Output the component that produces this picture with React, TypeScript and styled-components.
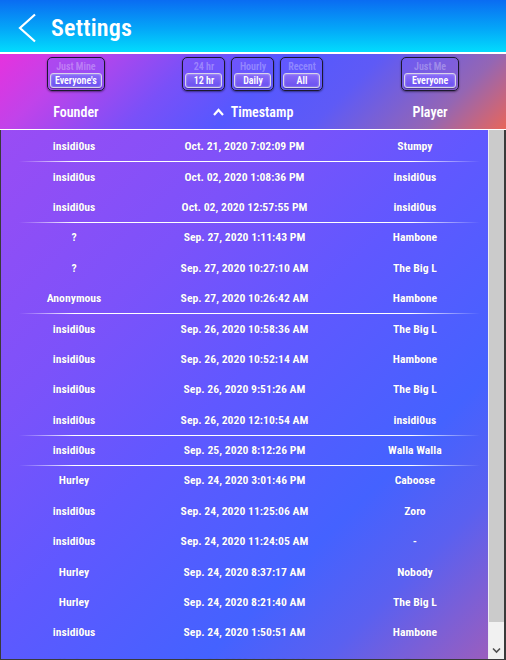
import React, { FC } from 'react'
import styled, { createGlobalStyle } from 'styled-components'

const GlobalStyle = createGlobalStyle`
  html, body {
    margin: 0;
    padding: 0;
    width: 506px;
    height: 660px;
    overflow: hidden;
    background: #2b2b33;
  }
  * {
    box-sizing: border-box;
  }
`

const FONT = `Roboto, "Open Sans", "DejaVu Sans Condensed", sans-serif`

type Entry = {
    founder: string
    time: string
    player: string
    divider?: boolean
}

const entries: Entry[] = [
    {founder: 'insidi0us', time: 'Oct. 21, 2020 7:02:09 PM', player: 'Stumpy'},
    {founder: 'insidi0us', time: 'Oct. 02, 2020 1:08:36 PM', player: 'insidi0us', divider: true},
    {founder: 'insidi0us', time: 'Oct. 02, 2020 12:57:55 PM', player: 'insidi0us'},
    {founder: '?', time: 'Sep. 27, 2020 1:11:43 PM', player: 'Hambone', divider: true},
    {founder: '?', time: 'Sep. 27, 2020 10:27:10 AM', player: 'The Big L'},
    {founder: 'Anonymous', time: 'Sep. 27, 2020 10:26:42 AM', player: 'Hambone'},
    {founder: 'insidi0us', time: 'Sep. 26, 2020 10:58:36 AM', player: 'The Big L', divider: true},
    {founder: 'insidi0us', time: 'Sep. 26, 2020 10:52:14 AM', player: 'Hambone'},
    {founder: 'insidi0us', time: 'Sep. 26, 2020 9:51:26 AM', player: 'The Big L'},
    {founder: 'insidi0us', time: 'Sep. 26, 2020 12:10:54 AM', player: 'insidi0us'},
    {founder: 'insidi0us', time: 'Sep. 25, 2020 8:12:26 PM', player: 'Walla Walla', divider: true},
    {founder: 'Hurley', time: 'Sep. 24, 2020 3:01:46 PM', player: 'Caboose', divider: true},
    {founder: 'insidi0us', time: 'Sep. 24, 2020 11:25:06 AM', player: 'Zoro'},
    {founder: 'insidi0us', time: 'Sep. 24, 2020 11:24:05 AM', player: '-'},
    {founder: 'Hurley', time: 'Sep. 24, 2020 8:37:17 AM', player: 'Nobody'},
    {founder: 'Hurley', time: 'Sep. 24, 2020 8:21:40 AM', player: 'The Big L'},
    {founder: 'insidi0us', time: 'Sep. 24, 2020 1:50:51 AM', player: 'Hambone'},
    {founder: 'Hurley', time: 'Sep. 24, 2020 1:12:33 AM', player: 'Zoro'},
]

const Root = styled.div`
  width: 506px;
  height: 660px;
  display: flex;
  flex-direction: column;
  font-family: ${FONT};
  font-stretch: 75%;
  color: #fff;
`

const Header = styled.header`
  height: 54px;
  flex: none;
  display: flex;
  align-items: center;
  gap: 13px;
  padding: 3px 0 0 18px;
  background: linear-gradient(180deg, #0a6cf2 0%, #04a6f8 55%, #02dcfd 100%);
  border-bottom: 2px solid #fff;
`

const Back = styled.svg`
  width: 20px;
  height: 30px;
  flex: none;
`

const Title = styled.h1`
  margin: 0;
  font-size: 24px;
  font-weight: 600;
  letter-spacing: 0.2px;
`

const Controls = styled.section`
  flex: none;
  height: 76px;
  display: flex;
  flex-direction: column;
  padding-top: 3px;
  background: linear-gradient(135deg, #e632de 0%, #c043ea 14%, #7a50f8 34%, #5558ff 50%, #5e5af6 66%, #9466b4 86%, #e8665a 100%);
  border-bottom: 1px solid #fff;
`

const Grid = styled.div`
  display: grid;
  grid-template-columns: 30% 40% 30%;
  justify-items: center;
  align-items: center;
`

const Group = styled.div`
  display: flex;
  gap: 6px;
`

const Toggle = styled.div<{ $w: number }>`
  width: ${({$w}) => $w}px;
  height: 34px;
  display: flex;
  flex-direction: column;
  align-items: stretch;
  padding: 2px;
  border: 1.5px solid #1c1830;
  border-radius: 5px;
  background: rgba(120, 90, 255, 0.35);
  box-shadow: 0 1px 2px rgba(0, 0, 0, 0.45);
`

const Off = styled.span`
  flex: 1;
  display: flex;
  align-items: center;
  justify-content: center;
  font-size: 10px;
  font-weight: 600;
  color: rgba(255, 255, 255, 0.3);
`

const On = styled.span`
  height: 15px;
  display: flex;
  align-items: center;
  justify-content: center;
  font-size: 10px;
  font-weight: 600;
  border: 1.5px solid #d8d4e8;
  border-radius: 3px;
  background: linear-gradient(180deg, #8a6cf8 0%, #6a50f0 100%);
  box-shadow: inset 0 0 2px rgba(255, 255, 255, 0.6), 0 1px 1px rgba(0, 0, 0, 0.4);
`

const ColumnTitle = styled.div`
  margin-top: 13px;
  font-size: 14px;
  font-weight: 600;
  display: flex;
  align-items: center;
  gap: 7px;
`

const Caret = styled.svg`
  width: 11px;
  height: 8px;
`

const List = styled.div`
  flex: 1;
  min-height: 0;
  display: flex;
  border-left: 1px solid #3a3a3a;
  border-bottom: 1px solid #3a3a3a;
  border-right: 2px solid #3a3a3a;
`

const Body = styled.div`
  flex: 1;
  overflow: hidden;
  padding-top: 1px;
  background: linear-gradient(135deg, #9a4cf4 0%, #7c52fa 28%, #6058ff 48%, #4462ff 72%, #5a60f0 84%, #9a5ebe 100%);
`

const ScrollBar = styled.div`
  width: 16px;
  flex: none;
  display: flex;
  flex-direction: column;
  background: #f1f1f1;
  border-left: 1px solid #ececf4;
`

const Thumb = styled.div`
  height: 492px;
  flex: none;
  background: #cbcbcb;
`

const ScrollArrow = styled.svg`
  margin-top: auto;
  width: 15px;
  height: 17px;
  flex: none;
`

const Row = styled(Grid)<{ $divider?: boolean }>`
  position: relative;
  height: 30.4px;
  font-size: 11.7px;
  font-weight: 700;
  text-shadow: 0 0 1px rgba(40, 20, 120, 0.35);

  &::before {
    content: '';
    display: ${({$divider}) => $divider ? 'block' : 'none'};
    position: absolute;
    top: 0;
    left: 18px;
    right: 8px;
    height: 1px;
    background: linear-gradient(90deg, rgba(255, 255, 255, 0) 0%, #fff 12%, #fff 85%, rgba(255, 255, 255, 0) 100%);
  }
`

const toggles = [
    {off: '24 hr', on: '12 hr'},
    {off: 'Hourly', on: 'Daily'},
    {off: 'Recent', on: 'All'},
]

const App: FC = () => {
    return (
        <Root>
            <GlobalStyle/>
            <Header>
                <Back viewBox="0 0 20 30">
                    <polyline points="17,1.5 2,15 17,28.5" fill="none" stroke="#fff" strokeWidth="2.2"/>
                </Back>
                <Title>Settings</Title>
            </Header>

            <Controls>
                <Grid>
                    <Toggle $w={58}>
                        <Off>Just Mine</Off>
                        <On>Everyone's</On>
                    </Toggle>
                    <Group>
                        {toggles.map((t, index) => (
                            <Toggle $w={43} key={index}>
                                <Off>{t.off}</Off>
                                <On>{t.on}</On>
                            </Toggle>
                        ))}
                    </Group>
                    <Toggle $w={58}>
                        <Off>Just Me</Off>
                        <On>Everyone</On>
                    </Toggle>
                </Grid>
                <Grid>
                    <ColumnTitle>Founder</ColumnTitle>
                    <ColumnTitle>
                        <Caret viewBox="0 0 11 8">
                            <polyline points="1,7 5.5,2 10,7" fill="none" stroke="#fff" strokeWidth="2.2"/>
                        </Caret>
                        Timestamp
                    </ColumnTitle>
                    <ColumnTitle>Player</ColumnTitle>
                </Grid>
            </Controls>

            <List>
                <Body>
                    {entries.map((item, index) => (
                        <Row $divider={item.divider} key={index}>
                            <span>{item.founder}</span>
                            <span>{item.time}</span>
                            <span>{item.player}</span>
                        </Row>
                    ))}
                </Body>
                <ScrollBar>
                    <Thumb/>
                    <ScrollArrow viewBox="0 0 15 17">
                        <polyline points="4,6.5 7.5,10 11,6.5" fill="none" stroke="#505050" strokeWidth="1.6"/>
                    </ScrollArrow>
                </ScrollBar>
            </List>
        </Root>
    )
}

export default App
